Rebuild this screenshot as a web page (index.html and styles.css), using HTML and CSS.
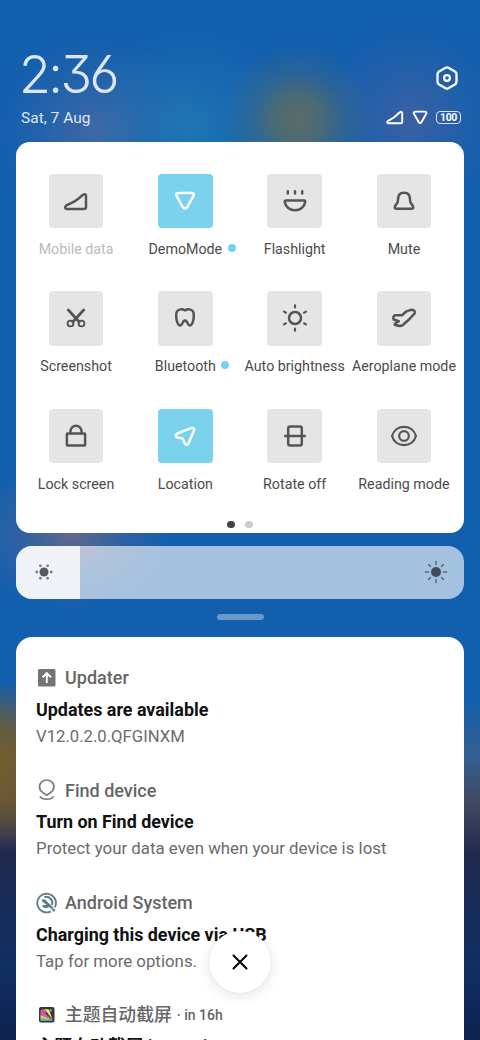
FILE: index.html
```html
<!DOCTYPE html>
<html lang="en">
<head>
<meta charset="utf-8">
<title>Control centre</title>
<link rel="stylesheet" href="styles.css">
</head>
<body>
<main class="shade">
  <header class="header">
    <div class="top-line">
      <div class="clock">2:36</div>
      <svg class="settings" width="26" height="26" viewBox="0 0 26 26" fill="none" stroke="#fff"><path d="M11.6 2.800Q13 2 14.400 2.800L20.900 6.500Q22.500 7.400 22.500 9.200V16.800Q22.500 18.600 20.900 19.500L14.400 23.200Q13 24 11.600 23.200L5.100 19.500Q3.500 18.600 3.500 16.800V9.200Q3.500 7.400 5.100 6.500Z" stroke-width="2.300"/><circle cx="13" cy="13" r="2.900" stroke-width="2.200"/></svg>
    </div>
    <div class="status-line">
      <span class="date">Sat, 7 Aug</span>
      <span class="status">
        <svg width="19" height="15" viewBox="0 0 19 15" fill="none" stroke="#fff" stroke-width="1.900" stroke-linejoin="round"><path d="M2.700 11.200Q9.500 8 14.500 2.500Q17.200 .7 17.200 3.500V12Q17.200 13.300 16 13.300H3.500Q1.200 13.200 2.700 11.200Z"/></svg>
        <svg width="16" height="15" viewBox="0 0 16 15" fill="none" stroke="#fff" stroke-width="1.900" stroke-linejoin="round"><path d="M3.300 1.600H12.900Q15.200 1.800 14.100 4L9.500 12Q8.100 14.300 6.700 12L2.100 4Q1 1.800 3.300 1.600Z"/></svg>
        <span class="battery">100</span>
      </span>
    </div>
  </header>

  <section class="toggles">
    <div class="grid">
      <div class="toggle disabled"><div class="tile"><svg class="icon" viewBox="0 0 28 28"><path d="M4.500 18.200Q14 14.800 20.500 8.200Q24 5.700 24 9V20Q24 22 22 22H5Q1.400 21.600 4.500 18.200Z"/></svg></div><span class="label">Mobile data</span></div>
      <div class="toggle on"><div class="tile"><svg class="icon" viewBox="0 0 28 28"><path d="M7.500 5.900H20.500Q24.200 6.200 22.300 9.200L16.300 20Q14 23.200 11.700 20L5.700 9.200Q3.800 6.200 7.500 5.900Z"/></svg></div><span class="label">DemoMode<i class="more"></i></span></div>
      <div class="toggle"><div class="tile"><svg class="icon" viewBox="0 0 28 28"><path d="M6.800 4.200V6.500M14 4.200V6.500M21.200 4.200V6.500M5 13.500H23Q24.500 13.500 24.200 15A10.300 9.600 0 0 1 3.800 15Q3.500 13.500 5 13.500Z"/></svg></div><span class="label">Flashlight</span></div>
      <div class="toggle"><div class="tile"><svg class="icon" viewBox="0 0 28 28"><path d="M8.100 12Q8.100 5.800 14 5.800T19.900 12C19.900 16 21 16.500 22.600 18.400Q24.500 21.700 21 21.700H7Q3.500 21.700 5.400 18.400C7 16.500 8.100 16 8.100 12Z"/></svg></div><span class="label">Mute</span></div>
      <div class="toggle"><div class="tile"><svg class="icon" viewBox="0 0 28 28"><path d="M6.300 6L17.300 18M21.700 6L10.700 18" stroke-width="2.700"/><circle cx="8.500" cy="19.500" r="2.900" stroke-width="1.900"/><circle cx="19.500" cy="19.500" r="2.900" stroke-width="1.900"/></svg></div><span class="label">Screenshot</span></div>
      <div class="toggle"><div class="tile"><svg class="icon" viewBox="0 0 28 28"><path d="M14 6.300C17 4.600 22.800 4.500 22.800 11C22.800 15 22 18.500 20.600 20.500Q18.900 22.500 17.200 20.200L15.700 17.500Q14 15.800 12.300 17.500L10.800 20.200Q9.100 22.500 7.400 20.500C6 18.500 5.200 15 5.200 11C5.200 4.500 11 4.600 14 6.300Z"/></svg></div><span class="label">Bluetooth<i class="more"></i></span></div>
      <div class="toggle"><div class="tile"><svg class="icon" viewBox="0 0 28 28"><circle cx="14" cy="14" r="6"/><path d="M14 1.300V3.500M14 24.500V26.700M3 7.600L4.900 8.700M23.100 19.300L25 20.400M3 20.400L4.900 19.300M23.100 8.700L25 7.600" stroke-width="2.200"/></svg></div><span class="label">Auto brightness</span></div>
      <div class="toggle"><div class="tile"><svg class="icon" viewBox="0 0 28 28"><path d="M16.500 7.300L20.500 5.800Q26 5.700 24.600 9.300L19 15.500L12.500 21.300Q10.500 22.800 4.800 20.800Q4.200 19.200 8.800 17.300L3.700 15.500Q2.400 12.300 5.200 11.300L12 11.200Z"/></svg></div><span class="label">Aeroplane mode</span></div>
      <div class="toggle"><div class="tile"><svg class="icon" viewBox="0 0 28 28"><rect x="4.900" y="11.500" width="18.200" height="12" rx=".5"/><path d="M8.500 11.500V9.300A5.500 5.500 0 0 1 19.500 9.300V11.500"/></svg></div><span class="label">Lock screen</span></div>
      <div class="toggle on"><div class="tile"><svg class="icon" viewBox="0 0 28 28"><path d="M6 11.700L20 6.100Q24 5.200 22.800 9L17.500 21.300Q15.500 24.500 13.600 21.200L12.400 17.800Q11.900 16.700 10.600 16.300L6.500 15.600Q3.200 14 6 11.700Z"/></svg></div><span class="label">Location</span></div>
      <div class="toggle"><div class="tile"><svg class="icon" viewBox="0 0 28 28"><rect x="7.200" y="4.500" width="13.600" height="19" rx="2"/><path d="M3.200 14H24.800" stroke-linecap="butt"/></svg></div><span class="label">Rotate off</span></div>
      <div class="toggle"><div class="tile"><svg class="icon" viewBox="0 0 28 28"><path d="M2 14C3.800 7.800 8.900 4.900 14 4.900S24.200 7.800 26 14C24.200 20.200 19.100 23.100 14 23.100S3.800 20.200 2 14Z" stroke-width="2.200"/><circle cx="14" cy="14" r="4.800" stroke-width="2.200"/></svg></div><span class="label">Reading mode</span></div>
    </div>
    <div class="pages"><i class="page current"></i><i class="page"></i></div>
  </section>

  <section class="brightness">
    <div class="level"><svg width="20" height="20" viewBox="0 0 20 20"><circle cx="10" cy="10" r="4.500" fill="#55585c"/><g fill="#7b7e84"><circle cx="2.800" cy="10" r="1.400"/><circle cx="17.200" cy="10" r="1.400"/><circle cx="6.400" cy="3.800" r="1.400"/><circle cx="13.600" cy="3.800" r="1.400"/><circle cx="6.400" cy="16.200" r="1.400"/><circle cx="13.600" cy="16.200" r="1.400"/></g></svg></div>
    <svg width="24" height="24" viewBox="0 0 24 24"><circle cx="12" cy="12" r="5" fill="#404c58"/><path d="M12 1.500V4.500M12 19.500V22.500M1.500 12H4.500M19.500 12H22.500M4.500 4.500L6.400 6.400M17.600 17.600L19.500 19.500M4.500 19.500L6.400 17.600M17.600 6.400L19.500 4.500" stroke="#5c6d80" stroke-width="1.600" stroke-linecap="round"/></svg>
  </section>

  <div class="handle"></div>

  <section class="notifications">
    <article class="note">
      <div class="app"><svg width="22" height="22" viewBox="0 0 22 22"><rect x="2" y="2" width="17.500" height="17.500" rx="1.500" fill="#747474"/><path d="M10.800 16V6.500M6.600 10.300L10.800 6.200L15 10.300" fill="none" stroke="#fff" stroke-width="1.900"/></svg><span class="app-name">Updater</span></div>
      <h2 class="title">Updates are available</h2>
      <p class="detail version">V12.0.2.0.QFGINXM</p>
    </article>
    <article class="note">
      <div class="app"><svg width="22" height="22" viewBox="0 0 22 22" fill="none" stroke="#7c7c7c" stroke-width="1.700" stroke-linecap="round"><path d="M7 13.800Q3.500 11.300 3.500 7.800A7.200 6.800 0 0 1 17.900 7.800Q17.900 11.300 14.400 13.800L10.700 16.300ZM4.300 18Q6 20.200 10.700 20.200T17.100 18"/></svg><span class="app-name">Find device</span></div>
      <h2 class="title">Turn on Find device</h2>
      <p class="detail">Protect your data even when your device is lost</p>
    </article>
    <article class="note">
      <div class="app"><svg width="22" height="22" viewBox="0 0 22 22" fill="none" stroke="#607d8b"><path d="M14.800 19.300A9.300 9.300 0 1 1 18.900 15.200" stroke-width="1.900"/><path d="M8.300 5.200A6.100 6.100 0 0 1 16 13" stroke-width="2"/><path d="M5.600 7.600L8.800 7.300L17.500 15.700L15.800 17.500L13.300 15.100Q9.500 17.600 6 14.300L7.500 12.700Q9.200 13.600 10.200 12.200Q6 11 5.600 7.600Z" fill="#607d8b" stroke="none"/><circle cx="17.700" cy="18" r="1.500" fill="#607d8b" stroke="none"/></svg><span class="app-name">Android System</span></div>
      <h2 class="title">Charging this device via USB</h2>
      <p class="detail">Tap for more options.</p>
    </article>
    <article class="note">
      <div class="app"><svg width="22" height="22" viewBox="0 0 22 22"><rect x="3" y="3" width="15.500" height="15.500" rx="2" fill="#353838"/><path d="M4.500 6L8.500 5L10.500 10Z" fill="#f05aa9"/><path d="M8.500 5L13 5.500L16.500 15.500Z" fill="#eef05b"/><path d="M4.500 6L16.500 15.500L4.500 11Z" fill="#d85ac9"/><path d="M4.500 11L16.500 15.700L4.500 14.500Z" fill="#ffbe55"/><path d="M4.500 14L16.500 15.500V16.800H4.500Z" fill="#60c9b8"/><circle cx="14.800" cy="6.200" r="1.300" fill="#8b9397"/></svg><span class="app-name chinese" lang="zh">主题自动截屏</span><span class="time">· in 16h</span></div>
      <h2 class="title chinese" lang="zh">主题自动截屏 is running</h2>
    </article>
  </section>

  <button class="clear" aria-label="Clear notifications"><svg width="20" height="20" viewBox="0 0 20 20"><path d="M3.500 3.500L16.500 16.500M16.500 3.500L3.500 16.500" stroke="#000" stroke-width="2" stroke-linecap="round"/></svg></button>
</main>
</body>
</html>
```
FILE: styles.css
```css
* { box-sizing: border-box; }

body { margin: 0; }

.shade {
  position: relative;
  display: flex;
  flex-direction: column;
  width: 480px;
  height: 1040px;
  overflow: hidden;
  padding: 0 16px;
  font-family: Roboto, "Noto Sans CJK SC", sans-serif;
  background:
    radial-gradient(ellipse 76px 78px at 298px 120px, rgba(94, 109, 98, .95), rgba(94, 109, 98, .75) 30%, rgba(94, 109, 98, .25) 65%, transparent),
    radial-gradient(ellipse 110px 100px at 190px 125px, rgba(36, 125, 180, .75), rgba(36, 125, 180, .25) 55%, transparent),
    radial-gradient(ellipse 100px 95px at 95px 130px, rgba(72, 105, 163, .85), rgba(72, 105, 163, .3) 55%, transparent),
    radial-gradient(ellipse 90px 95px at 410px 120px, rgba(68, 96, 160, .85), rgba(68, 96, 160, .35) 50%, transparent),
    radial-gradient(ellipse 100px 75px at 72px 535px, rgba(112, 104, 134, .85), rgba(112, 104, 134, .3) 50%, transparent),
    radial-gradient(ellipse 70px 85px at 0 765px, rgba(120, 95, 38, .95), rgba(114, 91, 42, .8) 45%, transparent),
    linear-gradient(#125fae 0, #125fae 695px, #335e90 758px, #42475e 805px, #20284f 855px, #152b59 915px, #102e62 970px, #0e2250 1040px);
}

.header {
  height: 142px;
  padding: 43px 3px 0 5px;
}

.top-line {
  display: flex;
  align-items: center;
  height: 62px;
}

.clock {
  margin-left: -2px;
  padding-top: 2px;
  font-family: Inter, sans-serif;
  font-size: 52px;
  font-weight: 300;
  line-height: 62px;
  letter-spacing: -2.600px;
  font-feature-settings: "cv03", "cv09";
  color: #dce6f6;
}

.settings {
  margin: 8px 1px 0 auto;
}

.status-line {
  display: flex;
  align-items: center;
  justify-content: space-between;
  height: 25px;
}

.date {
  font-size: 15.500px;
  color: #dce8f7;
}

.status {
  display: flex;
  align-items: center;
  gap: 8px;
}

.battery {
  width: 25px;
  height: 13px;
  border: 1px solid #dce5f5;
  border-radius: 4px;
  font-size: 10.500px;
  font-weight: 700;
  line-height: 11.500px;
  letter-spacing: -.4px;
  text-align: center;
  color: #fff;
}

.toggles {
  height: 391px;
  padding: 32px 5.400px 0;
  border-radius: 14px;
  background: #fff;
}

.grid {
  display: grid;
  grid-template-columns: repeat(4, 109.300px);
  grid-auto-rows: 117.300px;
}

.toggle {
  display: flex;
  flex-direction: column;
  align-items: center;
  color: #4c4c4c;
}

.tile {
  display: grid;
  place-items: center;
  width: 54.400px;
  height: 54.400px;
  border-radius: 4px;
  background: #e5e5e5;
}

.icon {
  width: 28px;
  height: 28px;
  fill: none;
  stroke: #555;
  stroke-width: 2.500;
  stroke-linecap: round;
  stroke-linejoin: round;
}

.on .tile { background: #7ad2ed; }
.on .icon { stroke: #fff; }
.disabled .label { color: #bbb; }

.label {
  position: relative;
  margin-top: 10.700px;
  font-size: 14.250px;
  line-height: 20px;
  white-space: nowrap;
}

.more {
  position: absolute;
  right: -13.500px;
  top: 5px;
  width: 8px;
  height: 8px;
  border-radius: 50%;
  background: #75d2ee;
}

.pages {
  display: flex;
  justify-content: center;
  gap: 10.500px;
  margin-top: -5px;
}

.page {
  width: 7.300px;
  height: 7.300px;
  border-radius: 50%;
  background: #ccc;
}

.page.current { background: #444; }

.brightness {
  display: flex;
  align-items: center;
  justify-content: space-between;
  height: 53.500px;
  margin-top: 12.500px;
  padding-right: 16px;
  overflow: hidden;
  border-radius: 16px;
  background: rgba(255, 255, 255, .62);
}

.level {
  display: flex;
  align-items: center;
  width: 64.300px;
  height: 100%;
  padding-left: 18px;
  background: rgba(250, 250, 252, .86);
}

.handle {
  width: 47px;
  height: 6px;
  margin: 14.800px auto 0;
  border-radius: 3px;
  background: #6998cb;
}

.notifications {
  flex: 1;
  min-height: 0;
  margin-top: 17.500px;
  padding-top: 26.600px;
  overflow: hidden;
  border-radius: 16px 16px 0 0;
  background: #fff;
}

.note {
  height: 112.500px;
  padding: 0 20px;
}

.app {
  display: flex;
  align-items: center;
  height: 28px;
  color: #666;
}

.app-name {
  margin-left: 7px;
  font-size: 18px;
  font-weight: 500;
}

.title {
  margin: 3.900px 0 0;
  font-size: 17.900px;
  font-weight: 700;
  line-height: 27px;
  color: #111;
  white-space: nowrap;
}

.detail {
  margin: 0;
  font-size: 16.850px;
  line-height: 27px;
  color: #6b6b6b;
  white-space: nowrap;
}

.detail.version { font-size: 16.700px; }

.app-name.chinese {
  font-size: 17.800px;
  line-height: 26px;
}

.time {
  margin-left: 5px;
  font-size: 14px;
  font-weight: 500;
}

.clear {
  position: absolute;
  left: 209px;
  top: 931px;
  display: grid;
  place-items: center;
  width: 62px;
  height: 62px;
  padding: 0;
  border: 0;
  border-radius: 50%;
  background: #fff;
  box-shadow: 0 3px 14px rgba(0, 0, 0, .1), 0 0 2px rgba(0, 0, 0, .12);
}
```
